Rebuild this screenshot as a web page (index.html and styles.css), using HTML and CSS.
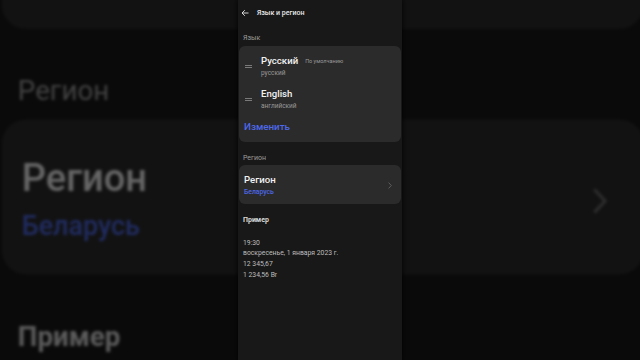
FILE: index.html
```html
<!doctype html>
<html lang="ru">
<head>
    <meta charset="UTF-8">
    <title>Язык и регион</title>
    <link rel="stylesheet" href="styles.css">
</head>
<body>
    <!-- zoomed, dimmed copy of the screen behind the phone -->
    <div class="backdrop" aria-hidden="true">
        <div class="screen zoomed">
            <div class="topbar">
                <svg class="back" width="8" height="8" viewBox="0 0 8 8"><path d="M7.5 4H1M3.8 1.2L1 4l2.8 2.8" fill="none" stroke="#e6e6e6" stroke-width="0.9"/></svg>
                <span class="title">Язык и регион</span>
            </div>
            <div class="label">Язык</div>
            <div class="card langs">
                <div class="lang">
                    <span class="handle"></span>
                    <div>
                        <div class="lang-name">Русский <span class="badge">По умолчанию</span></div>
                        <div class="lang-sub">русский</div>
                    </div>
                </div>
                <div class="lang">
                    <span class="handle"></span>
                    <div>
                        <div class="lang-name">English</div>
                        <div class="lang-sub">английский</div>
                    </div>
                </div>
                <div class="edit">Изменить</div>
            </div>
            <div class="label label-gap">Регион</div>
            <div class="card region">
                <div>
                    <div class="region-name">Регион</div>
                    <div class="region-value">Беларусь</div>
                </div>
                <svg class="chevron" width="4" height="7" viewBox="0 0 4 7"><path d="M0.6 0.6L3.3 3.5 0.6 6.4" fill="none" stroke="#6a6a6a" stroke-width="0.8"/></svg>
            </div>
            <div class="label label-gap sample-title">Пример</div>
            <div class="sample">
                <div>19:30</div>
                <div>воскресенье, 1 января 2023 г.</div>
                <div>12 345,67</div>
                <div>1 234,56 Br</div>
            </div>
        </div>
    </div>

    <div class="screen front">
        <div class="topbar">
            <svg class="back" width="8" height="8" viewBox="0 0 8 8"><path d="M7.5 4H1M3.8 1.2L1 4l2.8 2.8" fill="none" stroke="#e6e6e6" stroke-width="0.9"/></svg>
            <span class="title">Язык и регион</span>
        </div>
        <div class="label">Язык</div>
        <div class="card langs">
            <div class="lang">
                <span class="handle"></span>
                <div>
                    <div class="lang-name">Русский <span class="badge">По умолчанию</span></div>
                    <div class="lang-sub">русский</div>
                </div>
            </div>
            <div class="lang">
                <span class="handle"></span>
                <div>
                    <div class="lang-name">English</div>
                    <div class="lang-sub">английский</div>
                </div>
            </div>
            <div class="edit">Изменить</div>
        </div>
        <div class="label label-gap">Регион</div>
        <div class="card region">
            <div>
                <div class="region-name">Регион</div>
                <div class="region-value">Беларусь</div>
            </div>
            <svg class="chevron" width="4" height="7" viewBox="0 0 4 7"><path d="M0.6 0.6L3.3 3.5 0.6 6.4" fill="none" stroke="#6a6a6a" stroke-width="0.8"/></svg>
        </div>
        <div class="label label-gap sample-title">Пример</div>
        <div class="sample">
            <div>19:30</div>
            <div>воскресенье, 1 января 2023 г.</div>
            <div>12 345,67</div>
            <div>1 234,56 Br</div>
        </div>
    </div>
</body>
</html>
```

FILE: styles.css
```css
*{
    margin: 0;
    padding: 0;
    box-sizing: border-box;
}
body{
    width: 640px;
    height: 360px;
    overflow: hidden;
    background: #0a0a0a;
    font-family: Roboto, "Noto Sans", sans-serif;
    color: #ececec;
    display: flex;
    justify-content: center;
    position: relative;
}
.backdrop{
    position: absolute;
    top: 0;
    left: 0;
    width: 640px;
    height: 360px;
    overflow: hidden;
}
.screen{
    width: 164px;
    height: 360px;
    background: #181818;
    padding: 0 1px;
}
.zoomed{
    transform-origin: 0 0;
    transform: scale(3.96) translate(-0.5px, -134.75px);
    filter: brightness(0.42) blur(0.4px);
}
.front{
    position: relative;
    box-shadow: 0 0 5px 1px rgba(0,0,0,0.7);
}
.topbar{
    height: 25px;
    display: flex;
    align-items: center;
    padding-left: 2px;
}
.back{
    display: block;
    margin-right: 8px;
}
.title{
    font-size: 7px;
    font-weight: 500;
    color: #e8e8e8;
}
.label{
    font-size: 7px;
    line-height: 12px;
    color: #9c9c9c;
    padding: 7px 4px 2px;
}
.label-gap{
    padding-top: 10px;
    padding-bottom: 1px;
}
.card{
    background: #2b2b2b;
    border-radius: 6px;
    padding: 8px 5px;
}
.lang{
    display: flex;
    align-items: center;
    padding-left: 1px;
    margin-bottom: 9px;
}
.handle{
    width: 7px;
    height: 3px;
    border-top: 1px solid #7a7a7a;
    border-bottom: 1px solid #7a7a7a;
    margin-right: 9px;
}
.lang-name{
    font-size: 9.6px;
    font-weight: 500;
    line-height: 14px;
    color: #f2f2f2;
    display: flex;
    align-items: center;
}
.badge{
    font-size: 5.5px;
    font-weight: 400;
    color: #9a9a9a;
    margin-left: 7px;
}
.lang-sub{
    font-size: 6.5px;
    line-height: 10px;
    color: #9a9a9a;
}
.edit{
    font-size: 9.8px;
    font-weight: 500;
    line-height: 14px;
    color: #4d68e8;
}
.region{
    display: flex;
    align-items: center;
    justify-content: space-between;
    padding-top: 8px;
    padding-bottom: 7px;
}
.region-name{
    font-size: 9.6px;
    font-weight: 500;
    line-height: 14px;
    color: #f2f2f2;
}
.region-value{
    font-size: 6.8px;
    font-weight: 500;
    line-height: 10px;
    color: #4d68e8;
}
.chevron{
    display: block;
    margin-right: 4px;
}
.sample-title{
    font-weight: 700;
    color: #d8d8d8;
}
.sample{
    padding: 10.5px 4px 0;
    font-size: 6.8px;
    line-height: 10.8px;
    color: #bdbdbd;
}
```
